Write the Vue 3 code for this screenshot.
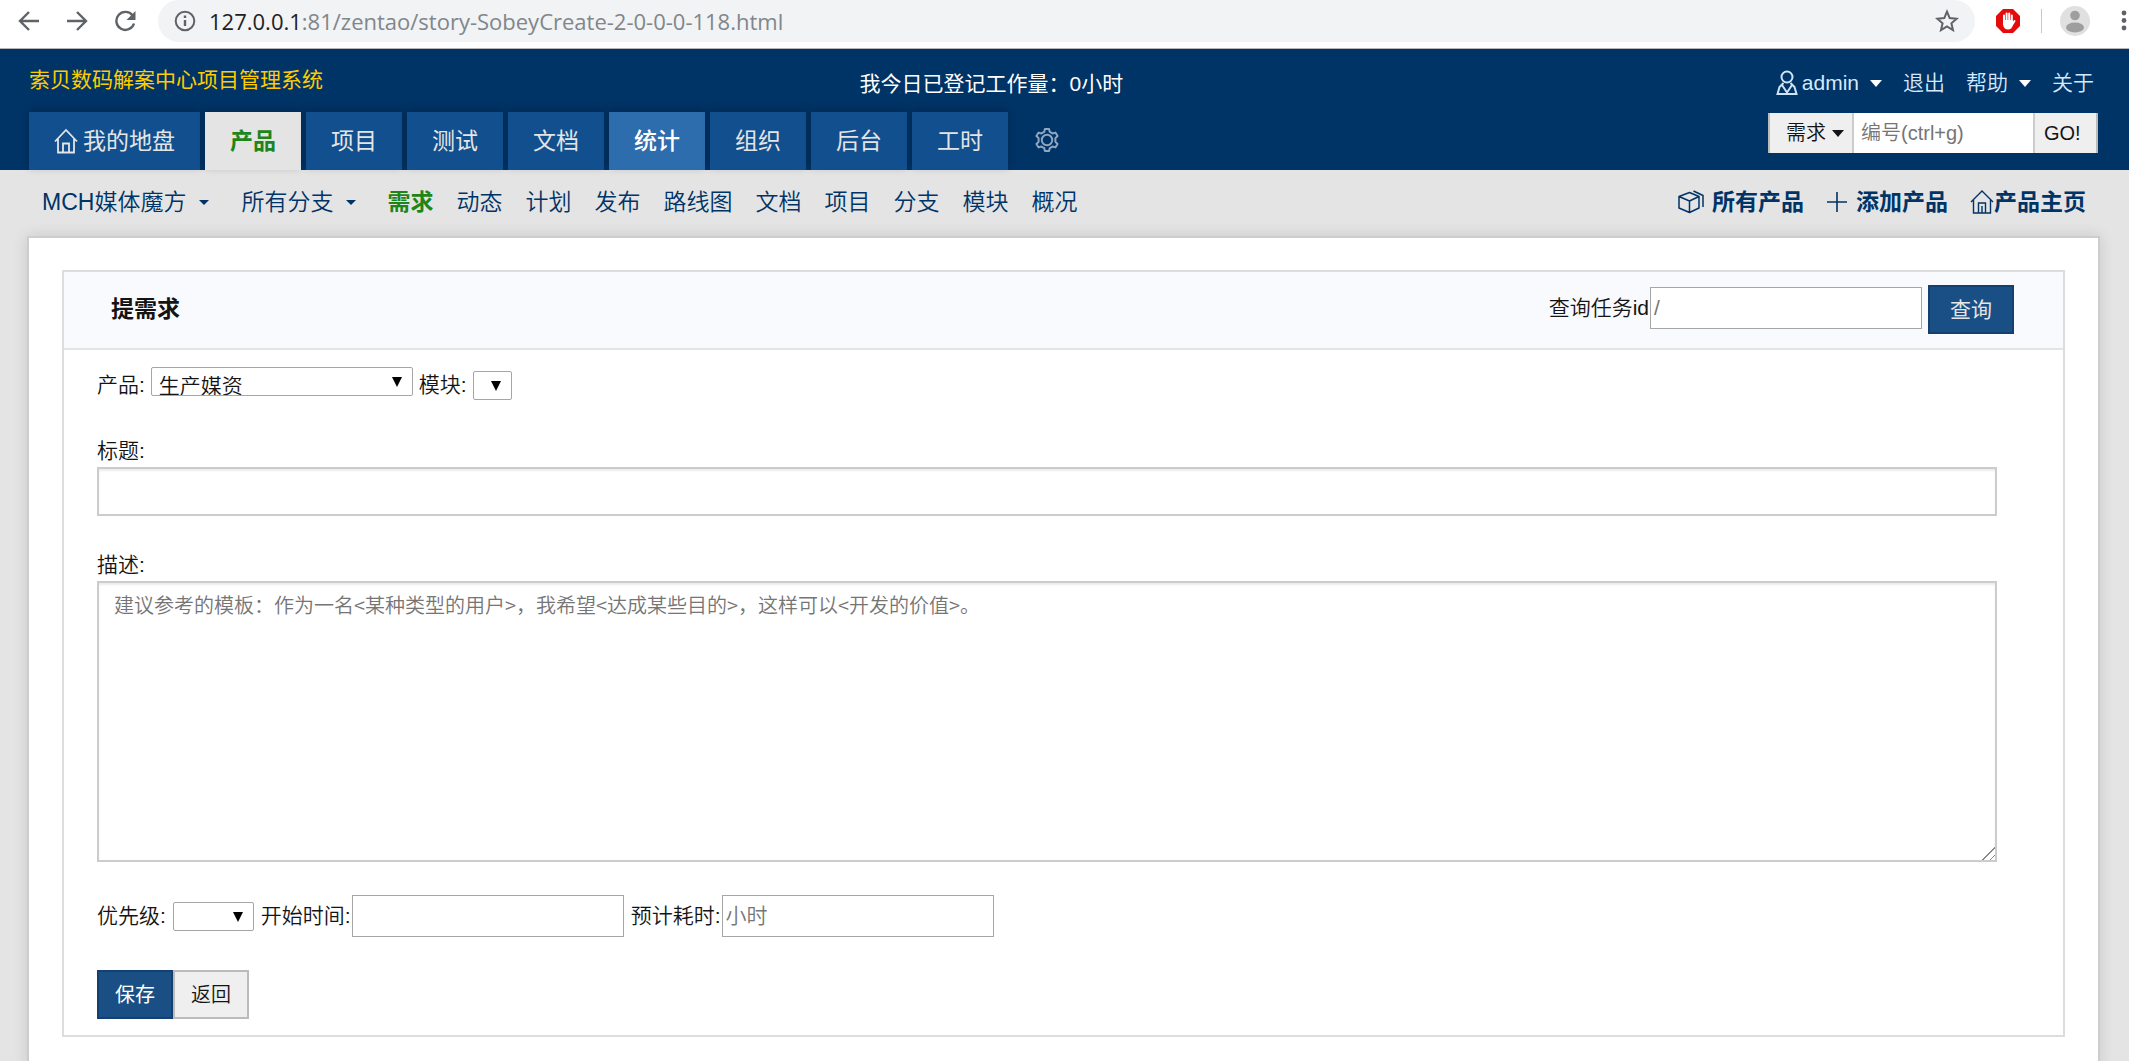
<script setup>
import { ref } from 'vue'

const tabs = ['产品', '项目', '测试', '文档', '统计', '组织', '后台', '工时']
const active = ref('产品')
const hovered = '统计'
const subLinks = ['需求', '动态', '计划', '发布', '路线图', '文档', '项目', '分支', '模块', '概况']
</script>

<template>
  <div class="page">
    <div class="browser">
      <div class="nav-buttons">
        <button type="button" aria-label="后退">
          <svg width="22" height="22" viewBox="0 0 22 22"><path d="M21 11H2M11 2l-9 9 9 9" /></svg>
        </button>
        <button type="button" aria-label="前进">
          <svg width="22" height="22" viewBox="0 0 22 22"><path d="M1 11h19M11 2l9 9-9 9" /></svg>
        </button>
        <button type="button" aria-label="刷新">
          <svg width="22" height="22" viewBox="0 0 22 22"><path d="M18.600 5.500A9 9 0 1 0 20 13.500" /><path class="solid" d="M21.500 1v9h-9z" /></svg>
        </button>
      </div>
      <div class="omnibox">
        <svg class="info" width="22" height="22" viewBox="0 0 22 22"><circle cx="11" cy="11" r="9.300" /><path d="M11 10v6M11 5.500v2.500" stroke-width="2.400" /></svg>
        <div class="url"><span class="host">127.0.0.1</span>:81/zentao/story-SobeyCreate-2-0-0-0-118.html</div>
        <svg class="star" width="24" height="24" viewBox="0 0 24 24"><path d="M12 2.600l2.700 6.500 7 .6-5.300 4.600 1.600 6.800-6-3.600-6 3.600 1.600-6.800-5.300-4.600 7-.6z" /></svg>
      </div>
      <svg class="block" width="24" height="24" viewBox="0 0 24 24">
        <path fill="#e60b0b" d="M7 0h10l7 7v10l-7 7H7l-7-7V7z" />
        <path fill="none" stroke="#fff" stroke-width="2" stroke-linecap="round" d="M8 13V6.500M10.600 12V4.500M13.200 12V4.500M15.800 13V6.500M16 16l2.500-4" />
        <path fill="#fff" d="M7 11h9.800v4.500q-.6 5-4.800 5t-5-5z" />
      </svg>
      <span class="divider"></span>
      <svg class="avatar" width="30" height="30" viewBox="0 0 30 30"><circle cx="15" cy="15" r="15" fill="#e0e0e0" /><circle cx="15" cy="9.500" r="4.800" fill="#9e9e9e" /><ellipse cx="15" cy="21.500" rx="9" ry="5" fill="#9e9e9e" /></svg>
      <svg class="dots" width="6" height="22" viewBox="0 0 6 22"><circle cx="3" cy="3" r="2.400" /><circle cx="3" cy="10.500" r="2.400" /><circle cx="3" cy="18" r="2.400" /></svg>
    </div>

    <header class="header">
      <div class="top-row">
        <div class="company">索贝数码解案中心项目管理系统</div>
        <div class="right-cell">
          <div class="workload">我今日已登记工作量：0小时</div>
          <div class="account">
            <a href="#" class="user">
              <svg width="22" height="26" viewBox="0 0 22 26" fill="none" stroke="#cfe3f7" stroke-width="2"><circle cx="11" cy="7" r="5.500" /><path d="M7.500 13L3.500 17L1.500 24h19L18.500 17L14.500 13M6 15l5 7.500 5-7.500" /></svg>
              admin<i class="caret"></i>
            </a>
            <a href="#">退出</a>
            <a href="#">帮助<i class="caret"></i></a>
            <a href="#">关于</a>
          </div>
        </div>
      </div>
      <div class="tab-row">
        <nav class="tabs">
          <a href="#" class="tab home">
            <svg width="24" height="26" viewBox="0 0 24 26" fill="none" stroke="currentColor" stroke-width="1.800"><path d="M1 13.500L12 2l11 11.500M4 11v13.500h16V11M9 24.500v-9h6v9" /></svg>
            我的地盘
          </a>
          <a
            v-for="t in tabs"
            :key="t"
            href="#"
            class="tab"
            :class="{ active: t === active, hover: t === hovered }"
            @click.prevent="active = t"
          >{{ t }}</a>
          <a href="#" class="gear" aria-label="设置">
            <svg width="24" height="24" viewBox="1 2 22 22" fill="none" stroke="#8fa7c0" stroke-width="1.800"><circle cx="12" cy="13" r="4.800" /><path d="M9.500 5.500l.6-2.600h3.800l.6 2.600 2.600 1.500 2.600-.8 2 3.200-2 1.900v3.400l2 1.900-2 3.200-2.600-.8-2.600 1.500-.6 2.600h-3.800l-.6-2.600-2.600-1.500-2.600.8-2-3.200 2-1.900v-3.400l-2-1.900 2-3.200 2.600.8z" stroke-linejoin="round" /></svg>
          </a>
        </nav>
        <form class="search" @submit.prevent>
          <button type="button" class="type">需求<i class="caret dark"></i></button>
          <input type="text" placeholder="编号(ctrl+g)" aria-label="编号" />
          <button type="submit" class="go">GO!</button>
        </form>
      </div>
    </header>

    <nav class="subnav">
      <a href="#" class="product">MCH媒体魔方<i class="caret small"></i></a>
      <a href="#" class="branch">所有分支<i class="caret small"></i></a>
      <div class="links">
        <a v-for="(l, i) in subLinks" :key="l" href="#" :class="{ current: i === 0 }">{{ l }}</a>
      </div>
      <div class="actions">
        <a href="#">
          <svg width="26" height="24" viewBox="0 0 26 24" fill="none" stroke="currentColor" stroke-width="1.500" stroke-linejoin="round"><path d="M1 6.500L11.500 2.500L21 6.500v11.500L11.500 22.500L1 18zM1 6.500l10.500 4.500L21 6.500M11.500 11v11.500M15.500 1l9.500 4.500v11.500" /></svg>
          所有产品
        </a>
        <a href="#">
          <svg width="22" height="24" viewBox="0 0 22 24" fill="none" stroke="currentColor" stroke-width="1.600"><path d="M1 12h20M11 2v20" /></svg>
          添加产品
        </a>
        <a href="#" class="tight">
          <svg width="24" height="24" viewBox="0 0 24 24" fill="none" stroke="currentColor" stroke-width="1.400"><path d="M1 12L12 1l11 11M3.500 10v13h17V10M8.500 23V13h7v10M12 16v7" /></svg>
          产品主页
        </a>
      </div>
    </nav>

    <main class="outer">
      <section class="panel">
        <div class="panel-head">
          <h1>提需求</h1>
          <form class="query" @submit.prevent>
            <label for="taskId">查询任务id</label>
            <input id="taskId" class="box" type="text" placeholder="/" />
            <button type="submit" class="btn primary">查询</button>
          </form>
        </div>
        <form class="panel-body" @submit.prevent>
          <div class="row first">
            <label for="product">产品:</label>
            <span class="select wide">
              <select id="product"><option>生产媒资</option></select>
              <svg width="10" height="10" viewBox="0 0 10 10"><path d="M0 0h10L5 10z" /></svg>
            </span>
            <label for="module">模块:</label>
            <span class="select mini">
              <select id="module"><option></option></select>
              <svg width="10" height="10" viewBox="0 0 10 10"><path d="M0 0h10L5 10z" /></svg>
            </span>
          </div>
          <div class="field">
            <label for="title">标题:</label>
            <input id="title" class="full" type="text" />
          </div>
          <div class="field">
            <label for="desc">描述:</label>
            <textarea id="desc" class="full" placeholder="建议参考的模板：作为一名<某种类型的用户>，我希望<达成某些目的>，这样可以<开发的价值>。"></textarea>
          </div>
          <div class="row second">
            <label for="pri">优先级:</label>
            <span class="select mid">
              <select id="pri"><option></option></select>
              <svg width="10" height="10" viewBox="0 0 10 10"><path d="M0 0h10L5 10z" /></svg>
            </span>
            <span class="pair"><label for="start">开始时间:</label><input id="start" class="box" type="text" /></span>
            <span class="pair"><label for="cost">预计耗时:</label><input id="cost" class="box" type="text" placeholder="小时" /></span>
          </div>
          <div class="buttons">
            <button type="submit" class="btn primary save">保存</button>
            <button type="button" class="btn plain">返回</button>
          </div>
        </form>
      </section>
    </main>
  </div>
</template>

<style>
html,
body {
  background: #e4e4e4;
  overflow: hidden;
}
</style>

<style scoped>
.page,
.page * {
  box-sizing: border-box;
}
.page {
  font-family: "Liberation Sans", "Noto Sans CJK SC", sans-serif;
  font-size: 21px;
  font-weight: 350;
  line-height: 32px;
  color: #141414;
  background: #e4e4e4;
  height: 100vh;
  overflow: hidden;
  display: flex;
  flex-direction: column;
}
a {
  text-decoration: none;
  color: inherit;
  white-space: nowrap;
}
button,
input,
select,
textarea {
  font: inherit;
  margin: 0;
  border-radius: 0;
}
svg {
  flex: none;
}

/* browser bar */
.browser {
  display: flex;
  align-items: center;
  height: 49px;
  flex: none;
  padding: 0 2px 6px 18px;
  background: #fff;
  border-bottom: 1px solid #b4b6b8;
}
.nav-buttons {
  display: flex;
  gap: 26px;
}
.nav-buttons button {
  display: flex;
  border: 0;
  padding: 0;
  background: none;
}
.nav-buttons path {
  fill: none;
  stroke: #5f6368;
  stroke-width: 2.4;
}
.nav-buttons .solid {
  fill: #5f6368;
  stroke: none;
}
.omnibox {
  flex: 1;
  display: flex;
  align-items: center;
  height: 42px;
  margin-left: 22px;
  padding: 0 16px;
  background: #f1f3f4;
  border-radius: 21px;
}
.info,
.star {
  fill: none;
  stroke: #5f6368;
  stroke-width: 2;
}
.url {
  flex: 1;
  margin-left: 13px;
  font-family: "Open Sans", sans-serif;
  font-size: 22px;
  font-weight: 400;
  color: #80868b;
}
.host {
  color: #202124;
}
.block {
  margin-left: 21px;
}
.divider {
  width: 1px;
  height: 24px;
  margin: 0 18px 0 21px;
  background: #c8cacd;
}
.dots {
  margin-left: 31px;
  fill: #5f6368;
}

/* header */
.header {
  flex: none;
  background: #036;
  padding: 0 31px 0 29px;
}
.top-row {
  display: grid;
  grid-template-columns: 2fr 3fr;
  height: 63px;
}
.company {
  line-height: 62px;
  color: #fc0;
  font-weight: 400;
}
.right-cell {
  display: flex;
  justify-content: space-between;
  line-height: 70px;
}
.workload {
  color: #fff;
  font-weight: 400;
  margin-left: 3px;
}
.account {
  display: flex;
  gap: 21px;
  line-height: 68px;
  color: #d5e9fb;
  padding-right: 4px;
}
.account a {
  display: flex;
  align-items: center;
  height: 68px;
}
.user svg {
  margin-right: 4px;
}
.caret {
  display: inline-block;
  border: 6px solid transparent;
  border-top: 7px solid #fff;
  border-bottom: 0;
  margin-left: 11px;
}
.caret.dark {
  border-top-color: #141414;
  margin-left: 6px;
}
.caret.small {
  border-width: 5px;
  border-bottom: 0;
  border-top-color: #036;
  margin-left: 13px;
}
.tab-row {
  display: flex;
  justify-content: space-between;
  align-items: flex-start;
}
.tabs {
  display: flex;
  gap: 5px;
  font-size: 23px;
}
.tab {
  display: flex;
  align-items: center;
  justify-content: center;
  width: 96px;
  height: 58px;
  background: #114f8e;
  color: #e5e5e5;
  font-weight: 400;
  box-shadow: 0 -2px 8px rgba(0, 0, 0, 0.2);
}
.tab.home {
  width: 171px;
  gap: 5px;
}
.tab.active {
  background: #e4e4e4;
  color: #1e8518;
  font-weight: 700;
}
.tab.hover {
  background: #2d6dae;
  color: #fff;
  font-weight: 500;
}
.gear {
  display: flex;
  align-items: center;
  height: 56px;
  margin-left: 22px;
}
.search {
  display: flex;
  height: 40px;
  margin-top: 1px;
  font-size: 20px;
  border: solid #bbb;
  border-width: 0 2px;
}
.search button {
  border: 0;
  background: #efefef;
  color: #141414;
  padding: 0;
}
.search .type {
  display: flex;
  align-items: center;
  justify-content: flex-end;
  width: 82px;
  padding-right: 8px;
}
.search input {
  width: 183px;
  border: solid #ccc;
  border-width: 0 2px;
  padding: 0 7px;
  background: #fff;
}
.search .go {
  width: 61px;
  padding: 0 9px;
  text-align: left;
}
::placeholder {
  color: #757575;
  opacity: 1;
}

/* sub navigation */
.subnav {
  flex: none;
  display: flex;
  align-items: center;
  height: 66px;
  padding: 0 43px 2px 42px;
  font-size: 23px;
  color: #036;
}
.subnav a {
  display: flex;
  align-items: center;
}
.branch {
  margin-left: 32px;
}
.links {
  display: flex;
  gap: 23px;
  margin-left: 31px;
}
.current {
  color: #1e8518;
  font-weight: 700;
}
.actions {
  display: flex;
  gap: 22px;
  margin-left: auto;
  font-weight: 700;
}
.actions a {
  gap: 8px;
}
.actions .tight {
  gap: 0;
}

/* content */
.outer {
  flex: 1 0 auto;
  margin: 0 29px 0 27px;
  padding: 32px 33px;
  background: #fff;
  border: 2px solid #cdcdcd;
  border-bottom: 0;
  box-shadow: 0 0 14px rgba(0, 0, 0, 0.12);
}
.panel {
  border: 2px solid #ddd;
}
.panel-head {
  display: flex;
  justify-content: space-between;
  align-items: flex-start;
  height: 78px;
  padding: 13px 49px 0 47px;
  background: #f9fafe;
  border-bottom: 2px solid #e4e4e4;
}
h1 {
  margin: 8px 0 0;
  font-size: 23px;
  line-height: 32px;
}
.query {
  display: flex;
  align-items: center;
}
.query label,
.query .box {
  margin-bottom: 3px;
}
.query label {
  margin-right: 1px;
}
.query .btn {
  margin-left: 6px;
}
.box {
  width: 272px;
  height: 42px;
  padding: 0 3px;
  border: 1px solid #a6a6a6;
  background: #fff;
}
.btn {
  height: 49px;
  padding: 0;
  font-size: 20px;
  border: 2px solid #bbb;
  width: 76px;
}
.btn.primary {
  background: #1a4f85;
  border-color: #144071;
  color: #fff;
  font-weight: 400;
}
.query .btn {
  width: 86px;
  font-size: 21px;
  color: #e5e5e5;
}
.plain {
  background: #efefef;
  color: #141414;
}
.panel-body {
  padding: 18px 66px 16px 33px;
}
.row {
  display: flex;
  align-items: center;
  gap: 6px;
}
.select {
  position: relative;
  height: 29px;
}
.select select {
  display: block;
  appearance: none;
  width: 100%;
  height: 29px;
  padding: 8px 7px 0;
  line-height: 20px;
  border: 1px solid #a6a6a6;
  border-radius: 2px;
  background: #fff;
  color: #141414;
}
.select svg {
  position: absolute;
  right: 11px;
  top: 10px;
  pointer-events: none;
}
.wide {
  width: 262px;
  margin-bottom: 8px;
}
.mini {
  width: 39px;
}
.mid {
  width: 81px;
}
.row.first {
  height: 34px;
}
.pair {
  display: flex;
  align-items: center;
  gap: 1px;
}
.field {
  margin-top: 33px;
}
.field label {
  display: block;
}
.full {
  display: block;
  width: 100%;
  height: 49px;
  border: 2px solid #ccc;
  background: #fff;
  box-shadow: inset 0 2px 2px rgba(0, 0, 0, 0.08);
}
textarea.full {
  height: 281px;
  padding: 6px 15px;
  font-family: "Noto Sans CJK SC", sans-serif;
  font-size: 20px;
  resize: vertical;
}
textarea::-webkit-resizer {
  background: linear-gradient(135deg, #fff 12px, #888 12px 13px, #fff 13px 17px, #888 17px 18px, #fff 18px);
}
.row.second {
  gap: 7px;
  margin-top: 33px;
}
.buttons {
  display: flex;
  margin-top: 33px;
}
</style>
